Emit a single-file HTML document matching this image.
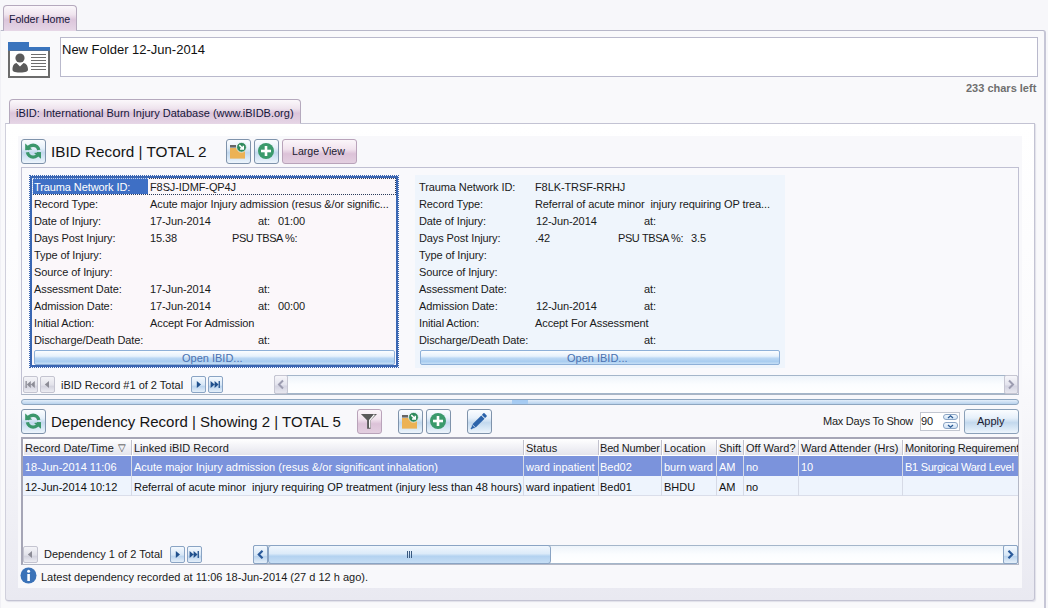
<!DOCTYPE html>
<html><head><meta charset="utf-8">
<style>
*{box-sizing:border-box;margin:0;padding:0}
html,body{width:1048px;height:608px;overflow:hidden;background:#f7f7fa;font-family:"Liberation Sans",sans-serif;font-size:11px;color:#1a1a1a}
.a{position:absolute}
.t{position:absolute;white-space:pre;line-height:13px}
.btn{position:absolute;border:1px solid #7f93ab;border-radius:3px;background:linear-gradient(#fbfdff 0%,#e6f0fa 35%,#c3d9ee 55%,#d9e8f6 80%,#eef5fc 100%)}
.pbtn{position:absolute;border:1px solid #b9a3ba;border-radius:3px;background:linear-gradient(#fbf6fa 0%,#f1e3ee 40%,#dcc2d8 60%,#e3cfe0 100%)}
.nb{position:absolute;width:15px;height:17px;border:1px solid #8aa4c4;border-radius:2px;background:linear-gradient(#f4f9fe,#d6e6f6 55%,#b9d3ee 60%,#e5eff9)}
.nbd{position:absolute;width:15px;height:17px;border:1px solid #c4c4d0;border-radius:2px;background:linear-gradient(#f4f4f8,#e2e2ea 55%,#d2d2de 60%,#ececf2)}
.row{position:absolute;height:17px;line-height:17px;padding-top:1px;white-space:pre;letter-spacing:-0.1px}
.gh{position:absolute;top:1px;height:18px;line-height:18px;white-space:pre}
</style></head><body>
<!-- Folder Home tab -->
<div class="a" style="left:3px;top:5px;width:74px;height:26px;border:1px solid #b5a9bd;border-bottom:none;border-radius:4px 4px 0 0;background:linear-gradient(#fbf8fb 0%,#efe4ee 35%,#dcc5db 55%,#e0cde0 75%,#e6d6e6 100%)"></div>
<div class="t" style="left:9px;top:13px;font-size:10.6px;color:#16163a">Folder Home</div>
<!-- outer panel -->
<div class="a" style="left:0;top:30px;width:1046px;height:580px;border-top:1px solid #b7b7c9;border-right:2px solid #c6c6d6;border-left:1px solid #f0f0f5;border-radius:0 3px 0 0;background:#f9f9fb"></div>
<div class="a" style="left:4px;top:30px;width:72px;height:1px;background:#e6d6e6"></div>

<!-- folder icon -->
<svg class="a" style="left:8px;top:42px" width="42" height="36" viewBox="0 0 42 36">
<rect x="1" y="8" width="40" height="27" fill="#fff" stroke="#6c6c6c" stroke-width="2"/>
<rect x="0" y="0" width="21" height="6" fill="#3a74bd"/>
<rect x="0" y="5" width="42" height="3.6" fill="#3a74bd"/>
<circle cx="12" cy="16" r="4.6" fill="#5a5a5a"/>
<path d="M4.5 27.5 C4.5 23 6.5 21.5 8.5 21 L12 24.5 L15.5 21 C17.5 21.5 20 23 20 27.5 C20 29.5 18 30.5 12 30.5 C6 30.5 4.5 29.5 4.5 27.5Z" fill="#5a5a5a"/>
<g fill="#6e6e6e"><rect x="23" y="12" width="15" height="1"/><rect x="23" y="15" width="15" height="1"/><rect x="23" y="18" width="15" height="1"/><rect x="23" y="21" width="15" height="1"/><rect x="23" y="24" width="15" height="1"/><rect x="23" y="27" width="15" height="1"/></g>
</svg>
<!-- textbox -->
<div class="a" style="left:60px;top:37px;width:978px;height:40px;border:1px solid #b9b9cc;background:#fff"></div>
<div class="t" style="left:62px;top:42px;font-size:13px;line-height:15px;color:#111">New Folder 12-Jun-2014</div>
<div class="t" style="left:966px;top:82px;font-weight:bold;color:#6f6f6f">233 chars left</div>

<!-- iBID tab -->
<div class="a" style="left:9px;top:99px;width:292px;height:25px;border:1px solid #b5a9bd;border-bottom:none;border-radius:4px 4px 0 0;background:linear-gradient(#fbf8fb 0%,#efe4ee 35%,#dcc5db 55%,#e0cde0 75%,#e6d6e6 100%)"></div>
<div class="t" style="left:16px;top:107px;color:#16163a">iBID: International Burn Injury Database (www.iBIDB.org)</div>
<!-- inner panel -->
<div class="a" style="left:5px;top:123px;width:1030px;height:478px;border:1px solid #c3c3d3;border-left-color:#d0d0dc;border-radius:0 0 3px 3px;box-shadow:1px 1px 1px rgba(150,150,180,0.25);background:linear-gradient(#ffffff 0%,#fbfbfd 50%,#e9e9f1 100%)"></div>
<div class="a" style="left:10px;top:123px;width:290px;height:1px;background:#e6d6e6"></div>
<div class="a" style="left:18px;top:136px;width:1004px;height:452px;background:#f8f8fb"></div>

<!-- IBID title -->
<div class="btn" style="left:21px;top:139px;width:25px;height:25px"></div>
<svg class="a" style="left:24px;top:142px" width="19" height="19" viewBox="0 0 19 19">
<path d="M3.4 8 A5.8 5.8 0 0 1 14.8 8" fill="none" stroke="#3b976b" stroke-width="3.3"/>
<path d="M14.8 10.3 A5.8 5.8 0 0 1 3.4 10.3" fill="none" stroke="#3b976b" stroke-width="3.3"/>
<path d="M1.2 1.6 L1.2 8.2 L8.2 7.4Z" fill="#3b976b"/>
<path d="M17 16.8 L17 10.1 L10 10.9Z" fill="#3b976b"/>
</svg>
<div class="t" style="left:51px;top:143px;font-size:15.3px;line-height:17px;color:#141414">IBID Record | TOTAL 2</div>
<div class="btn" style="left:226px;top:139px;width:25px;height:25px"></div>
<svg class="a" style="left:229px;top:142px" width="19" height="19" viewBox="0 0 19 19">
<rect x="1" y="3" width="6" height="2.6" fill="#666"/>
<rect x="1" y="6" width="15" height="10.6" fill="#ecb255"/>
<circle cx="12.5" cy="5.3" r="4.9" fill="#2e8a5c" stroke="#f4f8fb" stroke-width="0.8"/>
<path d="M10.3 3.1 L14 6.8 M14.3 3.8 L14.3 7.1 L11 7.1" fill="none" stroke="#fff" stroke-width="1.5"/>
</svg>
<div class="btn" style="left:254px;top:139px;width:25px;height:25px"></div>
<svg class="a" style="left:257px;top:142px" width="19" height="19" viewBox="0 0 19 19">
<circle cx="9" cy="9" r="8" fill="#3a9a6c"/>
<rect x="4" y="7.7" width="10" height="2.6" fill="#fff"/><rect x="7.7" y="4" width="2.6" height="10" fill="#fff"/>
</svg>
<div class="pbtn" style="left:282px;top:139px;width:75px;height:25px"></div>
<div class="t" style="left:292px;top:145px;font-size:10.6px;color:#1a1a30">Large View</div>

<!-- card container -->
<div class="a" style="left:21px;top:167px;width:998px;height:228px;border:1px solid #c0c0d2;border-bottom-color:#a9b4c4;background:#f9f9fc"></div>

<!-- card 1 -->
<div class="a" style="left:29px;top:175px;width:370px;height:193px;border:1px dotted #3a66b2;"></div><div class="a" style="left:30px;top:176px;width:368px;height:191px;border:2px solid #3a66b2;background:#fbf7fa"></div>
<div class="a" style="left:32px;top:178px;width:364px;height:17px;border:1px dotted #2a3a5a"></div>
<div class="a" style="left:33px;top:178px;width:115px;height:16px;background:#3e6fc5"></div><div class="a" style="left:33px;top:178px;width:115px;height:0;border-top:1px dotted #c8d8f0"></div><div class="a" style="left:32px;top:178px;width:0;height:17px;border-left:1px dotted #c8d8f0"></div>
<div class="a" id="c1" style="left:34px;top:178px">
<div class="row" style="left:0;top:0;color:#fff">Trauma Network ID:</div><div class="row" style="left:116px;top:0">F8SJ-IDMF-QP4J</div>
<div class="row" style="left:0;top:17px">Record Type:</div><div class="row" style="left:116px;top:17px">Acute major Injury admission (resus &amp;/or signific...</div>
<div class="row" style="left:0;top:34px">Date of Injury:</div><div class="row" style="left:116px;top:34px">17-Jun-2014</div><div class="row" style="left:224px;top:34px">at:</div><div class="row" style="left:244px;top:34px">01:00</div>
<div class="row" style="left:0;top:51px">Days Post Injury:</div><div class="row" style="left:116px;top:51px">15.38</div><div class="row" style="left:198px;top:51px;letter-spacing:-0.4px">PSU TBSA %:</div>
<div class="row" style="left:0;top:68px">Type of Injury:</div>
<div class="row" style="left:0;top:85px">Source of Injury:</div>
<div class="row" style="left:0;top:102px">Assessment Date:</div><div class="row" style="left:116px;top:102px">17-Jun-2014</div><div class="row" style="left:224px;top:102px">at:</div>
<div class="row" style="left:0;top:119px">Admission Date:</div><div class="row" style="left:116px;top:119px">17-Jun-2014</div><div class="row" style="left:224px;top:119px">at:</div><div class="row" style="left:244px;top:119px">00:00</div>
<div class="row" style="left:0;top:136px">Initial Action:</div><div class="row" style="left:116px;top:136px">Accept For Admission</div>
<div class="row" style="left:0;top:153px">Discharge/Death Date:</div><div class="row" style="left:224px;top:153px">at:</div>
</div>
<div class="a" style="left:34px;top:350px;width:361px;height:15px;border:1px solid #8eb0d8;border-radius:2px;background:linear-gradient(#fbfdff 0%,#e6f1fc 40%,#bcd8f4 55%,#a9cdf0 80%,#c6dff6 100%)"></div>
<div class="t" style="left:182px;top:352px;color:#4a72b0">Open IBID...</div>

<!-- card 2 -->
<div class="a" style="left:415px;top:175px;width:370px;height:193px;background:#eff5fc"></div>
<div class="a" id="c2" style="left:420px;top:178px">
<div class="row" style="left:-1px;top:0">Trauma Network ID:</div><div class="row" style="left:115px;top:0">F8LK-TRSF-RRHJ</div>
<div class="row" style="left:-1px;top:17px">Record Type:</div><div class="row" style="left:115px;top:17px">Referral of acute minor  injury requiring OP trea...</div>
<div class="row" style="left:-1px;top:34px">Date of Injury:</div><div class="row" style="left:116px;top:34px">12-Jun-2014</div><div class="row" style="left:224px;top:34px">at:</div>
<div class="row" style="left:-1px;top:51px">Days Post Injury:</div><div class="row" style="left:115px;top:51px">.42</div><div class="row" style="left:198px;top:51px;letter-spacing:-0.4px">PSU TBSA %:</div><div class="row" style="left:271px;top:51px">3.5</div>
<div class="row" style="left:-1px;top:68px">Type of Injury:</div>
<div class="row" style="left:-1px;top:85px">Source of Injury:</div>
<div class="row" style="left:-1px;top:102px">Assessment Date:</div><div class="row" style="left:224px;top:102px">at:</div>
<div class="row" style="left:-1px;top:119px">Admission Date:</div><div class="row" style="left:116px;top:119px">12-Jun-2014</div><div class="row" style="left:224px;top:119px">at:</div>
<div class="row" style="left:-1px;top:136px">Initial Action:</div><div class="row" style="left:115px;top:136px">Accept For Assessment</div>
<div class="row" style="left:-1px;top:153px">Discharge/Death Date:</div><div class="row" style="left:224px;top:153px">at:</div>
</div>
<div class="a" style="left:420px;top:350px;width:360px;height:15px;border:1px solid #8eb0d8;border-radius:2px;background:linear-gradient(#fbfdff 0%,#e6f1fc 40%,#bcd8f4 55%,#a9cdf0 80%,#c6dff6 100%)"></div>
<div class="t" style="left:567px;top:352px;color:#4a72b0">Open IBID...</div>

<!-- nav bar 1 -->
<div class="nbd" style="left:23px;top:376px"></div><svg class="a" style="left:23px;top:376px" width="15" height="17" viewBox="0 0 15 17"><rect x="2.5" y="5" width="1.3" height="7" fill="#8c8c96"/><path d="M3.8 8.5 L7.8 5 V12Z M7.8 8.5 L11.8 5 V12Z" fill="#8c8c96"/></svg><div class="nbd" style="left:40px;top:376px"></div><svg class="a" style="left:40px;top:376px" width="15" height="17" viewBox="0 0 15 17"><path d="M4.8 8.5 L9 5 V12Z" fill="#8c8c96"/></svg>
<div class="t" style="left:61px;top:379px">iBID Record #1 of 2 Total</div>
<div class="nb" style="left:191px;top:376px"></div><svg class="a" style="left:191px;top:376px" width="15" height="17" viewBox="0 0 15 17"><path d="M10 8.5 L5.8 5 V12Z" fill="#1f4f8c"/></svg><div class="nb" style="left:208px;top:376px"></div><svg class="a" style="left:208px;top:376px" width="15" height="17" viewBox="0 0 15 17"><path d="M2.6 5 L6.6 8.5 L2.6 12Z M6.6 5 L10.6 8.5 L6.6 12Z" fill="#1f4f8c"/><rect x="10.6" y="5" width="1.3" height="7" fill="#1f4f8c"/></svg>
<!-- h scroll 1 -->
<div class="a" style="left:274px;top:375px;width:744px;height:19px;border:1px solid #a4b6ca;border-radius:2px;background:linear-gradient(#eef4fa,#fbfdff 50%,#ffffff)"></div>
<div class="a" style="left:274px;top:375px;width:14px;height:19px;border:1px solid #c6c6d2;border-radius:2px;background:linear-gradient(#f6f6fa,#e4e4ee 50%,#d4d4e2 60%,#e8e8f0)"></div>
<svg class="a" style="left:274px;top:375px" width="14" height="19" viewBox="0 0 14 19"><path d="M9 5.5 L5 9.5 L9 13.5" fill="none" stroke="#9c9cb0" stroke-width="2"/></svg>
<div class="a" style="left:1004px;top:375px;width:14px;height:19px;border:1px solid #c6c6d2;border-radius:2px;background:linear-gradient(#f6f6fa,#e4e4ee 50%,#d4d4e2 60%,#e8e8f0)"></div>
<svg class="a" style="left:1004px;top:375px" width="14" height="19" viewBox="0 0 14 19"><path d="M5 5.5 L9 9.5 L5 13.5" fill="none" stroke="#9c9cb0" stroke-width="2"/></svg>

<!-- splitter -->
<div class="a" style="left:21px;top:399px;width:998px;height:6px;border:1px solid #8ea6c0;border-radius:3px;background:linear-gradient(#e3eefa,#b8d2ec)"></div>
<div class="a" style="left:512px;top:400px;width:16px;height:4px;background:#a6cbf2"></div>

<!-- dependency title -->
<div class="btn" style="left:21px;top:409px;width:25px;height:25px"></div><svg class="a" style="left:24px;top:412px" width="19" height="19" viewBox="0 0 19 19">
<path d="M3.4 8 A5.8 5.8 0 0 1 14.8 8" fill="none" stroke="#3b976b" stroke-width="3.3"/>
<path d="M14.8 10.3 A5.8 5.8 0 0 1 3.4 10.3" fill="none" stroke="#3b976b" stroke-width="3.3"/>
<path d="M1.2 1.6 L1.2 8.2 L8.2 7.4Z" fill="#3b976b"/>
<path d="M17 16.8 L17 10.1 L10 10.9Z" fill="#3b976b"/>
</svg>
<div class="t" style="left:51px;top:413px;font-size:15px;line-height:17px;color:#141414">Dependency Record | Showing 2 | TOTAL 5</div>
<div class="pbtn" style="left:357px;top:409px;width:25px;height:25px"></div><svg class="a" style="left:357px;top:409px" width="25" height="25" viewBox="0 0 25 25">
<path d="M3.9 5 H20 L13.6 11.3 V19.8 H10.1 V11.3Z" fill="#5a5a5a"/>
<path d="M17.4 5.6 L12.7 11.2 V18.8" fill="none" stroke="#fff" stroke-width="1.3"/>
</svg>
<div class="btn" style="left:398px;top:409px;width:25px;height:25px"></div><svg class="a" style="left:401px;top:412px" width="19" height="19" viewBox="0 0 19 19">
<rect x="1" y="3" width="6" height="2.6" fill="#666"/>
<rect x="1" y="6" width="15" height="10.6" fill="#ecb255"/>
<circle cx="12.5" cy="5.3" r="4.9" fill="#2e8a5c" stroke="#f4f8fb" stroke-width="0.8"/>
<path d="M10.3 3.1 L14 6.8 M14.3 3.8 L14.3 7.1 L11 7.1" fill="none" stroke="#fff" stroke-width="1.5"/>
</svg>
<div class="btn" style="left:426px;top:409px;width:25px;height:25px"></div><svg class="a" style="left:429px;top:412px" width="19" height="19" viewBox="0 0 19 19">
<circle cx="9" cy="9" r="8" fill="#3a9a6c"/>
<rect x="4" y="7.7" width="10" height="2.6" fill="#fff"/><rect x="7.7" y="4" width="2.6" height="10" fill="#fff"/>
</svg>
<div class="btn" style="left:467px;top:409px;width:25px;height:25px"></div><svg class="a" style="left:467px;top:409px" width="25" height="25" viewBox="0 0 25 25">
<g transform="translate(12 12) rotate(-45)">
<rect x="-7" y="-2.3" width="12.5" height="4.6" fill="#2b63aa"/>
<rect x="6.3" y="-2.3" width="3" height="4.6" rx="0.8" fill="#2b63aa"/>
<path d="M-7.6 -2.3 L-10.6 0 L-7.6 2.3Z" fill="#2b63aa"/>
<rect x="-11.2" y="-0.9" width="1.4" height="1.8" fill="#2b63aa"/>
</g></svg>
<div class="t" style="left:823px;top:415px;letter-spacing:-0.25px">Max Days To Show</div>
<div class="a" style="left:920px;top:412px;width:40px;height:19px;border:1px solid #c2c6d0;background:#fff"></div>
<div class="t" style="left:921px;top:415px">90</div>
<div class="a" style="left:943px;top:414px;width:15px;height:6px;border:1px solid #8aa4c4;border-radius:3px;background:linear-gradient(#f4f9fe,#cfe2f5)"></div>
<div class="a" style="left:943px;top:422px;width:15px;height:7px;border:1px solid #8aa4c4;border-radius:3px;background:linear-gradient(#f4f9fe,#cfe2f5)"></div>
<svg class="a" style="left:943px;top:413px" width="15" height="17" viewBox="0 0 15 17"><path d="M5 5 L7.5 2.8 L10 5" fill="none" stroke="#2b5a94" stroke-width="1.3"/><path d="M5 12 L7.5 14.2 L10 12" fill="none" stroke="#2b5a94" stroke-width="1.3"/></svg>

<div class="btn" style="left:964px;top:409px;width:55px;height:25px;border-color:#8aa0b8"></div>
<div class="t" style="left:977px;top:415px;color:#1a1a30">Apply</div>

<!-- grid -->
<div class="a" style="left:21px;top:437px;width:998px;height:128px;border:1px solid #b4b8c6;border-top:2px solid #a6a6b6;border-left:2px solid #a6a6b6;background:#f8f8fb"></div>
<div class="a" style="left:23px;top:439px;width:995px;height:17px;background:linear-gradient(#ffffff,#f3f3f7 45%,#e4e4ec);border-left:1px solid #fff;border-bottom:1px solid #fff"></div>
<div class="a" style="left:23px;top:456px;width:995px;height:20px;background:#7b93dc"></div>
<div class="a" style="left:23px;top:476px;width:995px;height:20px;background:#eef4fd;border-bottom:1px solid #dadeea"></div>
<div class="a" style="left:131px;top:440px;width:1px;height:15px;background:#c2c2ce"></div><div class="a" style="left:132px;top:440px;width:1px;height:15px;background:#fff"></div><div class="a" style="left:131px;top:456px;width:1px;height:40px;background:#d6dae6"></div><div class="a" style="left:523px;top:440px;width:1px;height:15px;background:#c2c2ce"></div><div class="a" style="left:524px;top:440px;width:1px;height:15px;background:#fff"></div><div class="a" style="left:523px;top:456px;width:1px;height:40px;background:#d6dae6"></div><div class="a" style="left:598px;top:440px;width:1px;height:15px;background:#c2c2ce"></div><div class="a" style="left:599px;top:440px;width:1px;height:15px;background:#fff"></div><div class="a" style="left:598px;top:456px;width:1px;height:40px;background:#d6dae6"></div><div class="a" style="left:661px;top:440px;width:1px;height:15px;background:#c2c2ce"></div><div class="a" style="left:662px;top:440px;width:1px;height:15px;background:#fff"></div><div class="a" style="left:661px;top:456px;width:1px;height:40px;background:#d6dae6"></div><div class="a" style="left:716px;top:440px;width:1px;height:15px;background:#c2c2ce"></div><div class="a" style="left:717px;top:440px;width:1px;height:15px;background:#fff"></div><div class="a" style="left:716px;top:456px;width:1px;height:40px;background:#d6dae6"></div><div class="a" style="left:743px;top:440px;width:1px;height:15px;background:#c2c2ce"></div><div class="a" style="left:744px;top:440px;width:1px;height:15px;background:#fff"></div><div class="a" style="left:743px;top:456px;width:1px;height:40px;background:#d6dae6"></div><div class="a" style="left:798px;top:440px;width:1px;height:15px;background:#c2c2ce"></div><div class="a" style="left:799px;top:440px;width:1px;height:15px;background:#fff"></div><div class="a" style="left:798px;top:456px;width:1px;height:40px;background:#d6dae6"></div><div class="a" style="left:902px;top:440px;width:1px;height:15px;background:#c2c2ce"></div><div class="a" style="left:903px;top:440px;width:1px;height:15px;background:#fff"></div><div class="a" style="left:902px;top:456px;width:1px;height:40px;background:#d6dae6"></div>
<div class="a" style="left:23px;top:438px;width:995px;height:20px;overflow:hidden;font-size:11px">
<div class="gh" style="left:2px">Record Date/Time</div>
<div class="gh" style="left:95px;font-size:10px;color:#333">&#9661;</div>
<div class="gh" style="left:111px">Linked iBID Record</div>
<div class="gh" style="left:503px">Status</div>
<div class="gh" style="left:577px;letter-spacing:-0.2px">Bed Number</div>
<div class="gh" style="left:641px">Location</div>
<div class="gh" style="left:696px">Shift</div>
<div class="gh" style="left:723px">Off Ward?</div>
<div class="gh" style="left:778px">Ward Attender (Hrs)</div>
<div class="gh" style="left:882px;letter-spacing:-0.15px">Monitoring Requirement</div>
</div>
<div class="a" style="left:23px;top:457px;width:995px;height:20px;overflow:hidden;color:#fff">
<div class="gh" style="left:2px">18-Jun-2014 11:06</div>
<div class="gh" style="left:111px">Acute major Injury admission (resus &amp;/or significant inhalation)</div>
<div class="gh" style="left:503px">ward inpatient</div>
<div class="gh" style="left:577px">Bed02</div>
<div class="gh" style="left:641px">burn ward</div>
<div class="gh" style="left:696px">AM</div>
<div class="gh" style="left:723px">no</div>
<div class="gh" style="left:778px">10</div>
<div class="gh" style="left:882px;letter-spacing:-0.27px">B1 Surgical Ward Level</div>
</div>
<div class="a" style="left:23px;top:477px;width:995px;height:20px;overflow:hidden;color:#111">
<div class="gh" style="left:2px">12-Jun-2014 10:12</div>
<div class="gh" style="left:111px">Referral of acute minor  injury requiring OP treatment (injury less than 48 hours)</div>
<div class="gh" style="left:503px">ward inpatient</div>
<div class="gh" style="left:577px">Bed01</div>
<div class="gh" style="left:641px">BHDU</div>
<div class="gh" style="left:696px">AM</div>
<div class="gh" style="left:723px">no</div>
</div>
<!-- grid nav -->
<div class="nbd" style="left:23px;top:546px"></div><svg class="a" style="left:23px;top:546px" width="15" height="17" viewBox="0 0 15 17"><path d="M4.8 8.5 L9 5 V12Z" fill="#8c8c96"/></svg>
<div class="t" style="left:44px;top:548px">Dependency 1 of 2 Total</div>
<div class="nb" style="left:170px;top:546px"></div><svg class="a" style="left:170px;top:546px" width="15" height="17" viewBox="0 0 15 17"><path d="M10 8.5 L5.8 5 V12Z" fill="#1f4f8c"/></svg><div class="nb" style="left:187px;top:546px"></div><svg class="a" style="left:187px;top:546px" width="15" height="17" viewBox="0 0 15 17"><path d="M2.6 5 L6.6 8.5 L2.6 12Z M6.6 5 L10.6 8.5 L6.6 12Z" fill="#1f4f8c"/><rect x="10.6" y="5" width="1.3" height="7" fill="#1f4f8c"/></svg>
<div class="a" style="left:253px;top:545px;width:765px;height:19px;border:1px solid #a4b6ca;border-radius:2px;background:linear-gradient(#eef4fa,#fbfdff 50%,#ffffff)"></div>
<div class="a" style="left:253px;top:545px;width:15px;height:19px;border:1px solid #8aa4c4;border-radius:2px;background:linear-gradient(#f4f9fe,#d6e6f6 55%,#b9d3ee 60%,#e5eff9)"></div>
<div class="a" style="left:268px;top:545px;width:283px;height:19px;border:1px solid #8aa4c4;border-radius:3px;background:linear-gradient(#f0f6fd,#dcebf9 45%,#b3d2f0 60%,#c6def5)"></div>
<div class="a" style="left:1003px;top:545px;width:15px;height:19px;border:1px solid #8aa4c4;border-radius:2px;background:linear-gradient(#f4f9fe,#d6e6f6 55%,#b9d3ee 60%,#e5eff9)"></div>
<svg class="a" style="left:253px;top:545px" width="15" height="19" viewBox="0 0 15 19"><path d="M9.5 5.8 L5.8 9.5 L9.5 13.2" fill="none" stroke="#2a5a9a" stroke-width="2.2"/></svg>
<svg class="a" style="left:1003px;top:545px" width="15" height="19" viewBox="0 0 15 19"><path d="M5.5 5.8 L9.2 9.5 L5.5 13.2" fill="none" stroke="#2a5a9a" stroke-width="2.2"/></svg>
<div class="a" style="left:407px;top:551px;width:1px;height:7px;background:#3a5a80"></div>
<div class="a" style="left:409px;top:551px;width:1px;height:7px;background:#3a5a80"></div>
<div class="a" style="left:411px;top:551px;width:1px;height:7px;background:#3a5a80"></div>
<!-- info -->
<svg class="a" style="left:20px;top:567px" width="18" height="18" viewBox="0 0 18 18"><circle cx="8.5" cy="8.5" r="8" fill="#3a72b8"/><rect x="7.3" y="7" width="2.6" height="7" fill="#fff"/><circle cx="8.6" cy="4.3" r="1.5" fill="#fff"/></svg>
<div class="t" style="left:41px;top:571px">Latest dependency recorded at 11:06 18-Jun-2014 (27 d 12 h ago).</div>
</body></html>
